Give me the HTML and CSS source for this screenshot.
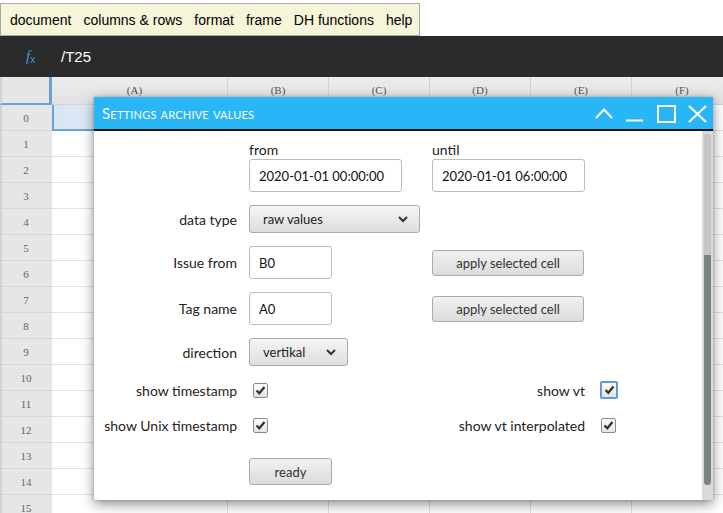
FILE: index.html
```html
<!DOCTYPE html>
<html>
<head>
<meta charset="utf-8">
<link rel="stylesheet" href="styles.css">
</head>
<body>
<div class="app">
  <nav class="menubar">
    <span>document</span><span>columns &amp; rows</span><span>format</span><span>frame</span><span>DH functions</span><span>help</span>
  </nav>
  <div class="formulabar">
    <span class="fx">f<sub>x</sub></span>
    <span class="formula">/T25</span>
  </div>
  <div class="sheet">
    <div class="corner"></div>
    <div class="colheads">
      <div class="ch wa">(A)</div><div class="ch">(B)</div><div class="ch">(C)</div><div class="ch">(D)</div><div class="ch">(E)</div><div class="ch">(F)</div>
    </div>
    <div class="rowheads">
      <div class="rh">0</div><div class="rh">1</div><div class="rh">2</div><div class="rh">3</div>
      <div class="rh">4</div><div class="rh">5</div><div class="rh">6</div><div class="rh">7</div>
      <div class="rh">8</div><div class="rh">9</div><div class="rh">10</div><div class="rh">11</div>
      <div class="rh">12</div><div class="rh">13</div><div class="rh">14</div><div class="rh">15</div>
    </div>
    <div class="cells">
      <div class="col wa"><div class="sel"></div></div>
      <div class="col"></div><div class="col"></div><div class="col"></div><div class="col"></div><div class="col"></div>
    </div>
  </div>

  <div class="dialog">
    <div class="titlebar">
      <span class="title">Settings archive values</span>
      <svg class="winctl" width="112" height="20" viewBox="0 0 112 20">
        <g fill="none" stroke="#fff" stroke-width="2">
          <polyline points="1,14 9,5.5 17,14"/>
          <line x1="31" y1="16.5" x2="48" y2="16.5"/>
          <rect x="63" y="2" width="17" height="16"/>
          <line x1="94" y1="2" x2="111" y2="18"/>
          <line x1="111" y1="2" x2="94" y2="18"/>
        </g>
      </svg>
    </div>
    <div class="dbody">
      <div class="form">
        <div></div>
        <div class="stack"><span class="toplbl">from</span><div class="input from">2020-01-01 00:00:00</div></div>
        <div class="stack"><span class="toplbl">until</span><div class="input until">2020-01-01 06:00:00</div></div>
        <div></div>

        <span class="lbl">data type</span>
        <div class="select stype">raw values<svg width="10" height="7" viewBox="0 0 10 7"><polyline points="1,1 5,5 9,1" fill="none" stroke="#333" stroke-width="2"/></svg></div>
        <div></div><div></div>

        <span class="lbl">Issue from</span>
        <div class="input short">B0</div>
        <div class="btn apply">apply selected cell</div>
        <div></div>

        <span class="lbl">Tag name</span>
        <div class="input short">A0</div>
        <div class="btn apply">apply selected cell</div>
        <div></div>

        <span class="lbl">direction</span>
        <div class="select sdir">vertikal<svg width="10" height="7" viewBox="0 0 10 7"><polyline points="1,1 5,5 9,1" fill="none" stroke="#333" stroke-width="2"/></svg></div>
        <div></div><div></div>

        <span class="lbl">show timestamp</span>
        <div class="cbcell"><span class="cb"><svg width="13" height="13" viewBox="0 0 13 13"><polyline points="2.5,6.5 5.3,9.3 10.5,3" fill="none" stroke="#333" stroke-width="2.3"/></svg></span></div>
        <span class="lbl">show vt</span>
        <div class="cbcell"><span class="cb focus"><svg width="13" height="14" viewBox="0 0 13 14"><polyline points="2.5,7 5.3,9.8 10.5,3.5" fill="none" stroke="#333" stroke-width="2.3"/></svg></span></div>

        <span class="lbl">show Unix timestamp</span>
        <div class="cbcell"><span class="cb"><svg width="13" height="13" viewBox="0 0 13 13"><polyline points="2.5,6.5 5.3,9.3 10.5,3" fill="none" stroke="#333" stroke-width="2.3"/></svg></span></div>
        <span class="lbl">show vt interpolated</span>
        <div class="cbcell"><span class="cb r"><svg width="13" height="13" viewBox="0 0 13 13"><polyline points="2.5,6.5 5.3,9.3 10.5,3" fill="none" stroke="#333" stroke-width="2.3"/></svg></span></div>

        <div></div>
        <div class="btn ready">ready</div>
        <div></div><div></div>
      </div>
      <div class="vscroll"><div class="bar"><div class="thumb"></div></div></div>
    </div>
  </div>
</div>
</body>
</html>
```

FILE: styles.css
```css
* { box-sizing: border-box; }
html, body { margin: 0; padding: 0; }
body {
  width: 723px;
  height: 513px;
  overflow: hidden;
  background: #fff;
  font-family: "Liberation Sans", Arial, sans-serif;
}
.app {
  position: relative;
  width: 723px;
  height: 513px;
  overflow: hidden;
}

/* menu bar */
.menubar {
  display: flex;
  gap: 12px;
  width: 420px;
  height: 33px;
  margin-top: 3px;
  padding-left: 9px;
  align-items: center;
  background: #f6f4d9;
  border: 1px solid #a8a8a0;
  font-size: 14px;
  color: #000;
}

/* formula bar */
.formulabar {
  height: 41px;
  background: #2b2b2b;
  display: flex;
  align-items: center;
}
.fx {
  margin-left: 26px;
  width: 35px;
  font-family: "Liberation Serif", serif;
  font-style: italic;
  font-size: 15px;
  color: #4a98dc;
}
.fx sub {
  font-size: 10px;
  font-style: normal;
  font-family: "Liberation Sans", sans-serif;
  vertical-align: -2px;
}
.formula {
  color: #fff;
  font-size: 15px;
}

/* sheet */
.sheet {
  display: grid;
  grid-template-columns: 52px 1fr;
  grid-template-rows: 28px 1fr;
}
.corner {
  background: #e6e6e6;
  border-right: 3px solid #6aa3d9;
  border-bottom: 2px solid #6aa3d9;
  border-left: 2px solid #d2d2d2;
}
.colheads {
  display: flex;
  background: linear-gradient(#ececec, #e2e2e2);
  border-bottom: 1px solid #d4d4d4;
}
.ch {
  flex: 0 0 101px;
  border-right: 1px solid #d2d2d2;
  font-family: "Liberation Serif", serif;
  font-size: 11px;
  color: #555;
  text-align: center;
  padding-top: 7px;
}
.ch.wa { flex-basis: 176px; padding-right: 10px; }
.rowheads {
  display: flex;
  flex-direction: column;
  border-left: 2px solid #d2d2d2;
}
.rh {
  height: 26px;
  background: #e6e6e6;
  border-bottom: 1px solid #d6d6d6;
  font-family: "Liberation Serif", serif;
  font-size: 11px;
  color: #6e6152;
  display: flex;
  align-items: center;
  justify-content: center;
  padding-right: 2px;
}
.cells {
  display: flex;
  height: 416px;
  background-image: repeating-linear-gradient(to bottom, transparent 0 25px, #e2e2e2 25px 26px);
}
.col {
  flex: 0 0 101px;
  border-right: 1px solid #dedede;
}
.col.wa { flex-basis: 176px; }
.sel {
  height: 26px;
  border: 2px solid #6aa3d9;
  border-top: 0;
  background: linear-gradient(to right, #d7e6f3, #eef5fb);
}

/* dialog */
.dialog {
  position: absolute;
  left: 94px;
  top: 97px;
  width: 619px;
  height: 403px;
  background: #fff;
  box-shadow: 0 4px 12px rgba(0,0,0,0.45), 0 0 3px rgba(0,0,0,0.2);
  display: flex;
  flex-direction: column;
  font-family: Lato, "Open Sans", sans-serif;
}
.titlebar {
  height: 34px;
  flex: none;
  background: #29b6f6;
  border-bottom: 2px solid #111;
  display: flex;
  align-items: center;
  justify-content: space-between;
  padding: 0 6px 0 8px;
}
.title {
  color: #fff;
  font-size: 15px;
  font-variant: small-caps;
  letter-spacing: 0.2px;
}
.winctl { display: block; margin-top: 1px; }
.dbody {
  flex: 1;
  display: flex;
  min-height: 0;
}
.form {
  flex: 1;
  display: grid;
  grid-template-columns: 143px 171px 153px 1fr;
  column-gap: 12px;
  row-gap: 13px;
  align-items: center;
  align-content: start;
  padding-top: 9px;
  font-size: 14px;
  color: #222;
}
.stack {
  display: flex;
  flex-direction: column;
}
.toplbl { line-height: 19px; }
.lbl { text-align: right; }
.input {
  height: 33px;
  border: 1px solid #bcbcbc;
  border-radius: 3px;
  background: #fff;
  display: flex;
  align-items: center;
  padding-left: 9px;
  font-size: 13px;
  color: #111;
}
.input.from { width: 153px; }
.input.until { width: 153px; }
.input.short { width: 83px; }
.select {
  height: 28px;
  border: 1px solid #ababab;
  border-radius: 3px;
  background: linear-gradient(#f5f5f5, #dedede);
  display: flex;
  align-items: center;
  justify-content: space-between;
  padding: 0 11px 0 13px;
  font-size: 13px;
  color: #222;
}
.select.stype { width: 171px; }
.select.sdir { width: 99px; }
.btn {
  height: 26px;
  border: 1px solid #ababab;
  border-radius: 3px;
  background: linear-gradient(#f1f1f1, #dcdcdc);
  display: flex;
  align-items: center;
  justify-content: center;
  font-size: 13px;
  color: #333;
}
.btn.apply { width: 152px; }
.btn.ready { width: 83px; height: 27px; margin-top: 9px; }
.cbcell {
  height: 22px;
  display: flex;
  align-items: center;
}
.cb {
  display: flex;
  align-items: center;
  justify-content: center;
  width: 15px;
  height: 15px;
  margin-left: 4px;
  border: 1px solid #8a8a8a;
  border-radius: 2px;
  background: linear-gradient(#fdfdfd, #e4e4e4);
}
.cb.focus {
  width: 18px;
  height: 18px;
  margin-left: 3px;
  border: 2px solid #5f9bd9;
}
.vscroll {
  flex: none;
  width: 11px;
  background: #dadada;
  padding: 3px 2px 15px 2px;
}
.bar {
  height: 100%;
  border-radius: 4px;
  background: #7d8283;
  overflow: hidden;
}
.thumb {
  height: 121px;
  background: #c6c6c6;
}
```
